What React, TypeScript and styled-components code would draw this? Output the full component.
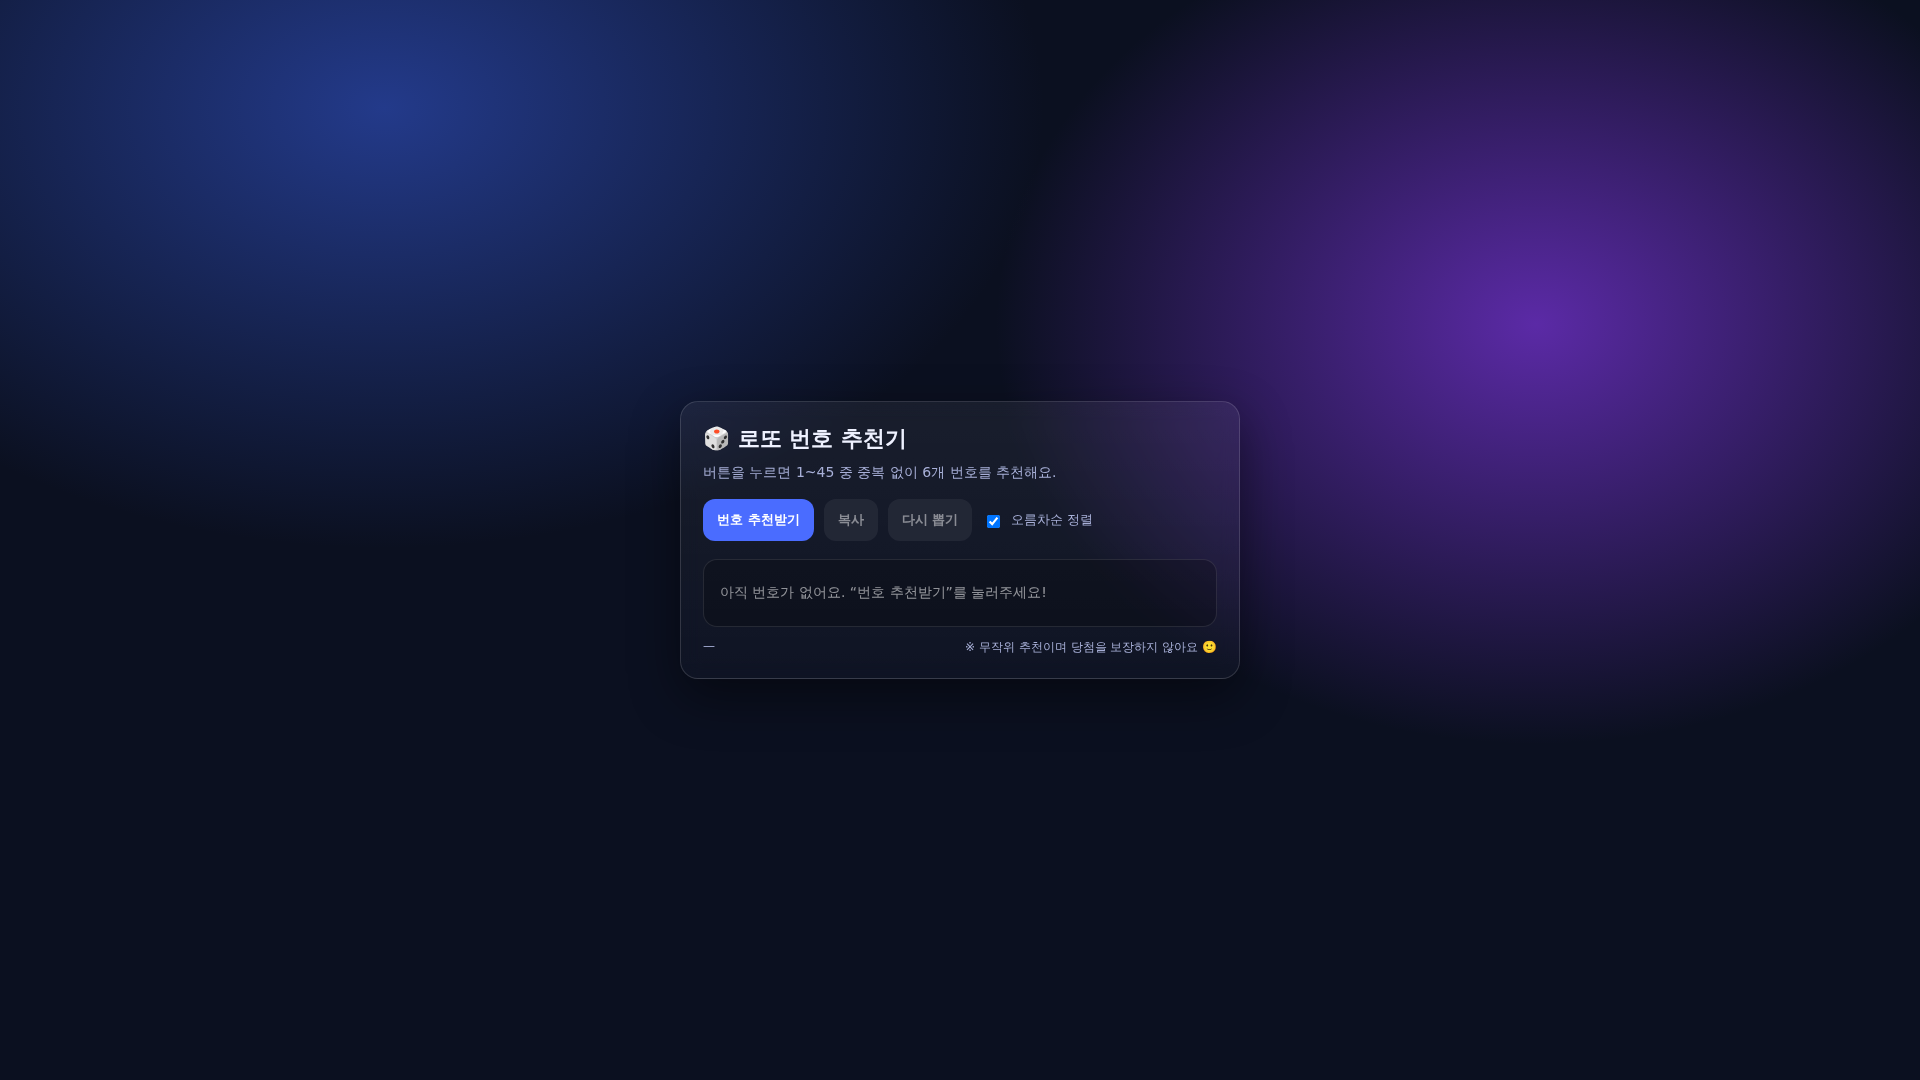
import React, { useState } from "react";
import styled, { createGlobalStyle } from "styled-components";

const GlobalStyle = createGlobalStyle`
  * { box-sizing: border-box; }
  body {
    margin: 0;
    min-height: 100vh;
    color: #eef1ff;
    font-family: "DejaVu Sans", sans-serif;
    background:
      radial-gradient(1200px 800px at 20% 10%, #233a8a 0%, transparent 55%),
      radial-gradient(900px 700px at 80% 30%, #5b2aa6 0%, transparent 60%),
      #0b1020;
  }
`;

const Page = styled.main`
  min-height: 100vh;
  display: grid;
  place-items: center;
  padding: 24px;
`;

const Card = styled.section`
  width: 100%;
  max-width: 560px;
  padding: 22px;
  border: 1px solid rgba(255, 255, 255, 0.14);
  border-radius: 18px;
  background: linear-gradient(180deg, rgba(255, 255, 255, 0.06), rgba(255, 255, 255, 0.02));
  box-shadow: 0 18px 50px rgba(0, 0, 0, 0.45);
  backdrop-filter: blur(10px);
`;

const Title = styled.h1`
  margin: 0 0 8px;
  font-size: 22px;
`;

const Lead = styled.p`
  margin: 0 0 17px;
  color: #a8b0d8;
  font-size: 14px;
  line-height: 20px;
`;

const Controls = styled.div`
  display: flex;
  flex-wrap: wrap;
  align-items: center;
  gap: 10px;
  margin-bottom: 18px;
`;

const Button = styled.button<{ $primary?: boolean }>`
  padding: 12px 14px;
  border: 0;
  border-radius: 12px;
  color: #ffffff;
  background: ${({ $primary }) => ($primary ? "#4a6cff" : "rgba(255, 255, 255, 0.12)")};
  font-family: inherit;
  font-size: 13px;
  line-height: 18px;
  font-weight: 700;
  cursor: pointer;
  &:disabled { opacity: 0.5; cursor: not-allowed; }
`;

const Option = styled.label`
  display: inline-flex;
  align-items: center;
  gap: 8px;
  color: #a8b0d8;
  font-size: 13px;
`;

const Checkbox = styled.input`
  margin: 5px 3px 3px 5px;
`;

const Result = styled.div`
  display: flex;
  align-items: center;
  min-height: 68px;
  padding: 16px;
  border: 1px solid rgba(255, 255, 255, 0.1);
  border-radius: 14px;
  background: rgba(0, 0, 0, 0.22);
  color: rgba(255, 255, 255, 0.55);
  font-size: 14px;
`;

const Footer = styled.footer`
  display: flex;
  justify-content: space-between;
  gap: 10px;
  margin-top: 12px;
  color: #a8b0d8;
  font-size: 12px;
`;

export default function App() {
  const [sorted, setSorted] = useState(true);
  return (
    <>
      <GlobalStyle />
      <Page>
        <Card>
          <Title>🎲 로또 번호 추천기</Title>
          <Lead>버튼을 누르면 1~45 중 중복 없이 6개 번호를 추천해요.</Lead>
          <Controls>
            <Button type="button" $primary>번호 추천받기</Button>
            <Button type="button" disabled>복사</Button>
            <Button type="button" disabled>다시 뽑기</Button>
            <Option>
              <Checkbox type="checkbox" checked={sorted} onChange={(e) => setSorted(e.target.checked)} />
              오름차순 정렬
            </Option>
          </Controls>
          <Result aria-live="polite">아직 번호가 없어요. “번호 추천받기”를 눌러주세요!</Result>
          <Footer>
            <span>—</span>
            <span>※ 무작위 추천이며 당첨을 보장하지 않아요 🙂</span>
          </Footer>
        </Card>
      </Page>
    </>
  );
}
